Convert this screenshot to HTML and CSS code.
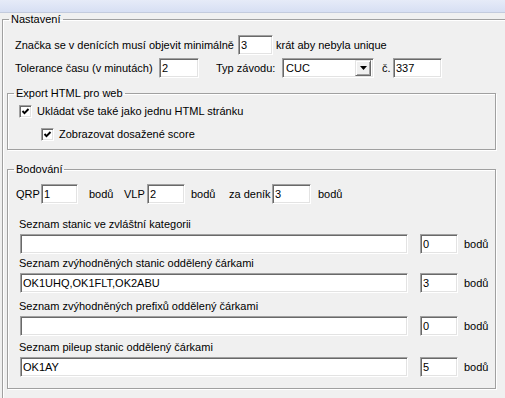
FILE: index.html
```html
<!DOCTYPE html>
<html lang="cs">
<head>
<meta charset="utf-8">
<title>Nastavení</title>
<link rel="stylesheet" href="styles.css">
</head>
<body>
<div class="topbar"></div>
<fieldset class="grp outer">
  <legend>Nastavení</legend>
  <div class="outer-body">
    <div class="row r1">
      <span class="l-znacka">Značka se v denících musí objevit minimálně</span>
      <input class="tb w-r1" type="text" value="3">
      <span class="after">krát aby nebyla unique</span>
    </div>
    <div class="row r2">
      <span class="l-tol">Tolerance času (v minutách)</span>
      <input class="tb w-tol" type="text" value="2">
      <span class="l-typ">Typ závodu:</span>
      <div class="combo">
        <span class="combo-text">CUC</span>
        <span class="combo-btn"><svg width="7" height="4" viewBox="0 0 7 4"><polygon points="0,0 7,0 3.5,4" fill="#000"/></svg></span>
      </div>
      <span class="l-c">č.</span>
      <input class="tb w-c" type="text" value="337">
    </div>

    <fieldset class="grp inner export">
      <legend>Export HTML pro web</legend>
      <div class="exp-body">
        <label class="chk c1"><span class="cb"><svg width="9" height="9" viewBox="0 0 9 9"><polyline points="1.5,4 3.5,6.2 7.5,2" fill="none" stroke="#000" stroke-width="1.9"/></svg></span><span>Ukládat vše také jako jednu HTML stránku</span></label>
        <label class="chk c2"><span class="cb"><svg width="9" height="9" viewBox="0 0 9 9"><polyline points="1.5,4 3.5,6.2 7.5,2" fill="none" stroke="#000" stroke-width="1.9"/></svg></span><span>Zobrazovat dosažené score</span></label>
      </div>
    </fieldset>

    <fieldset class="grp inner bod">
      <legend>Bodování</legend>
      <div class="bod-body">
        <div class="row pts">
          <span class="l-qrp">QRP</span>
          <input class="tb w-qrp" type="text" value="1">
          <span class="l-b1">bodů</span>
          <span class="l-vlp">VLP</span>
          <input class="tb w-vlp" type="text" value="2">
          <span class="l-b2">bodů</span>
          <span class="l-den">za deník</span>
          <input class="tb w-den" type="text" value="3">
          <span class="l-b3">bodů</span>
        </div>
        <div class="lists">
          <div class="item i1">
            <div class="item-label">Seznam stanic ve zvláštní kategorii</div>
            <div class="item-row"><input class="tb wide" type="text" value=""><input class="tb small" type="text" value="0"><span class="unit">bodů</span></div>
          </div>
          <div class="item i2">
            <div class="item-label">Seznam zvýhodněných stanic oddělený čárkami</div>
            <div class="item-row"><input class="tb wide" type="text" value="OK1UHQ,OK1FLT,OK2ABU"><input class="tb small" type="text" value="3"><span class="unit">bodů</span></div>
          </div>
          <div class="item i3">
            <div class="item-label">Seznam zvýhodněných prefixů oddělený čárkami</div>
            <div class="item-row"><input class="tb wide" type="text" value=""><input class="tb small" type="text" value="0"><span class="unit">bodů</span></div>
          </div>
          <div class="item i4">
            <div class="item-label">Seznam pileup stanic oddělený čárkami</div>
            <div class="item-row"><input class="tb wide" type="text" value="OK1AY"><input class="tb small" type="text" value="5"><span class="unit">bodů</span></div>
          </div>
        </div>
      </div>
    </fieldset>
  </div>
</fieldset>
</body>
</html>
```

FILE: styles.css
```css
* { box-sizing: border-box; }
html, body { margin: 0; padding: 0; }
body {
  width: 505px;
  height: 398px;
  overflow: hidden;
  background: #f0f0f0;
  color: #000;
  font: 11px/13px "Liberation Sans", Arial, sans-serif;
}

.topbar {
  height: 13px;
  background: linear-gradient(#e6ebf8, #d7dff3);
  border-bottom: 1px solid #c3cbdd;
}

/* etched group box */
.grp {
  margin: 0;
  padding: 0;
  min-width: 0;
  border: 1px solid #a0a0a0;
  box-shadow: inset 1px 1px 0 #fff, 1px 1px 0 #fff;
}
.grp > legend {
  margin-left: 6px;
  padding: 0 2px;
  line-height: 13px;
}

/* outer box continues past the window edges; only its top and left show */
.outer {
  margin-left: 2px;
  width: 504px;
  height: 386px;
  box-shadow: inset 1px 1px 0 #fff;
}
.outer-body { padding: 9px 0 0 4px; }

.row {
  display: flex;
  align-items: center;
  height: 20px;
  padding-left: 8px;
  white-space: nowrap;
}
.r2 { margin-top: 3px; }

/* sunken text box */
.tb {
  height: 20px;
  margin: 0;
  padding: 0 2px;
  font: 11px "Liberation Sans", Arial, sans-serif;
  color: #000;
  background: #fff;
  border: 1px solid;
  border-color: #a0a0a0 #fff #fff #a0a0a0;
  box-shadow: inset 1px 1px 0 #696969, inset -1px -1px 0 #e3e3e3;
  outline: none;
  border-radius: 0;
}

.l-znacka { width: 223px; }
.w-r1 { width: 35px; }
.after { margin-left: 3px; }

.l-tol { width: 144px; }
.w-tol { width: 40px; }
.l-typ { margin-left: 17px; width: 66px; }
.combo {
  width: 92px;
  height: 20px;
  display: flex;
  align-items: center;
  justify-content: space-between;
  background: #fff;
  border: 1px solid;
  border-color: #a0a0a0 #fff #fff #a0a0a0;
  box-shadow: inset 1px 1px 0 #696969, inset -1px -1px 0 #e3e3e3;
  padding: 2px 2px 2px 3px;
}
.combo-btn {
  width: 16px;
  height: 16px;
  display: flex;
  align-items: center;
  justify-content: center;
  background: #f0f0f0;
  border: 1px solid;
  border-color: #e3e3e3 #696969 #696969 #e3e3e3;
  box-shadow: inset 1px 1px 0 #fff, inset -1px -1px 0 #a0a0a0;
}
.l-c { margin-left: 8px; width: 11px; }
.w-c { width: 49px; }

/* export group */
.inner { width: 489px; }
.export { margin-top: 9px; }
.exp-body { padding: 5px 0 8px 11px; }
.chk {
  display: flex;
  align-items: center;
  height: 13px;
  gap: 5px;
  white-space: nowrap;
}
.c2 { margin-top: 10px; padding-left: 22px; }
.cb {
  width: 13px;
  height: 13px;
  flex: none;
  display: flex;
  align-items: center;
  justify-content: center;
  background: #fff;
  border: 1px solid;
  border-color: #a0a0a0 #fff #fff #a0a0a0;
  box-shadow: inset 1px 1px 0 #696969, inset -1px -1px 0 #e3e3e3;
}

/* scoring group */
.bod { margin-top: 13px; }
.bod-body { padding: 8px 0 11px 0; }
.pts { padding-left: 8px; }
.l-qrp { width: 25px; }
.w-qrp { width: 37px; }
.l-b1 { margin-left: 11px; width: 35px; }
.l-vlp { width: 23px; }
.w-vlp { width: 38px; }
.l-b2 { margin-left: 6px; width: 38px; }
.l-den { width: 43px; }
.w-den { width: 39px; }
.l-b3 { margin-left: 7px; }

.lists {
  margin-top: 14px;
  padding-left: 12px;
  display: flex;
  flex-direction: column;
}
.i2 { margin-top: 3px; }
.i3 { margin-top: 7px; }
.i4 { margin-top: 5px; }
.item-label { margin-left: -1px; height: 13px; white-space: nowrap; }
.item-row {
  margin-top: 3px;
  display: flex;
  align-items: center;
}
.wide { width: 388px; }
.small { width: 38px; margin-left: 12px; }
.unit { margin-left: 6px; }
```
